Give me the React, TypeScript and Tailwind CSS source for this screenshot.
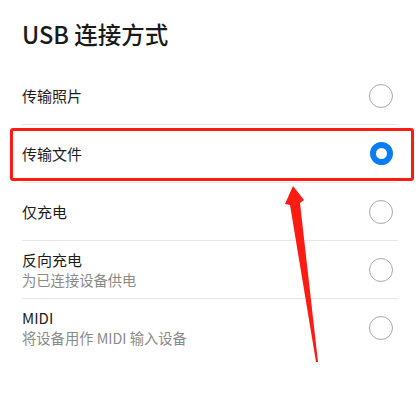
import React from 'react';

type Option = {
  title: string;
  desc?: string;
  checked?: boolean;
};

const options: Option[] = [
  { title: '传输照片' },
  { title: '传输文件', checked: true },
  { title: '仅充电' },
  { title: '反向充电', desc: '为已连接设备供电' },
  { title: 'MIDI', desc: '将设备用作 MIDI 输入设备' },
];

const Radio: React.FC<{ checked?: boolean }> = ({ checked }) =>
  checked ? (
    <div className="w-[23px] h-[23px] rounded-full border-[6.5px] border-[#0a7df5]" />
  ) : (
    <div className="w-[24px] h-[24px] rounded-full border-[1.5px] border-[#a8a8a8]" />
  );

const App: React.FC = () => {
  return (
    <div
      className="relative w-[419px] h-[406px] bg-white overflow-hidden"
      style={{ fontFamily: '"Noto Sans CJK SC", "Noto Sans", sans-serif' }}
    >
      <div className="h-[67px] flex items-center pl-[22px] pt-[2px]">
        <h1 className="text-[23.5px] font-medium text-[#1a1a1a] leading-none">USB 连接方式</h1>
      </div>

      <ul className="pl-[22px] pr-[21px]">
        {options.map((opt, i) => (
          <li
            key={opt.title}
            className={`h-[58px] flex items-center justify-between ${
              i < options.length - 1 ? 'border-b border-[#e6e6e6]' : ''
            }`}
          >
            <div className="flex flex-col">
              <span className="text-[15px] leading-[20px] text-[#1c1c1c]">{opt.title}</span>
              {opt.desc && (
                <span className="text-[14.3px] leading-[20px] text-[#8a8a8a]">{opt.desc}</span>
              )}
            </div>
            <div className="pr-[5px]">
              <Radio checked={opt.checked} />
            </div>
          </li>
        ))}
      </ul>

      {/* annotation overlay */}
      <div className="absolute left-[10px] top-[128px] w-[404px] h-[53px] border-[3px] border-[#fe1c12] rounded-[3px] pointer-events-none" />
      <svg
        className="absolute inset-0 pointer-events-none"
        width="419"
        height="406"
        viewBox="0 0 419 406"
      >
        <polygon
          points="293,186 304,200 300,203 318,362 316,362 290,205 285,204"
          fill="#fe1c12"
        />
      </svg>
    </div>
  );
};

export default App;
